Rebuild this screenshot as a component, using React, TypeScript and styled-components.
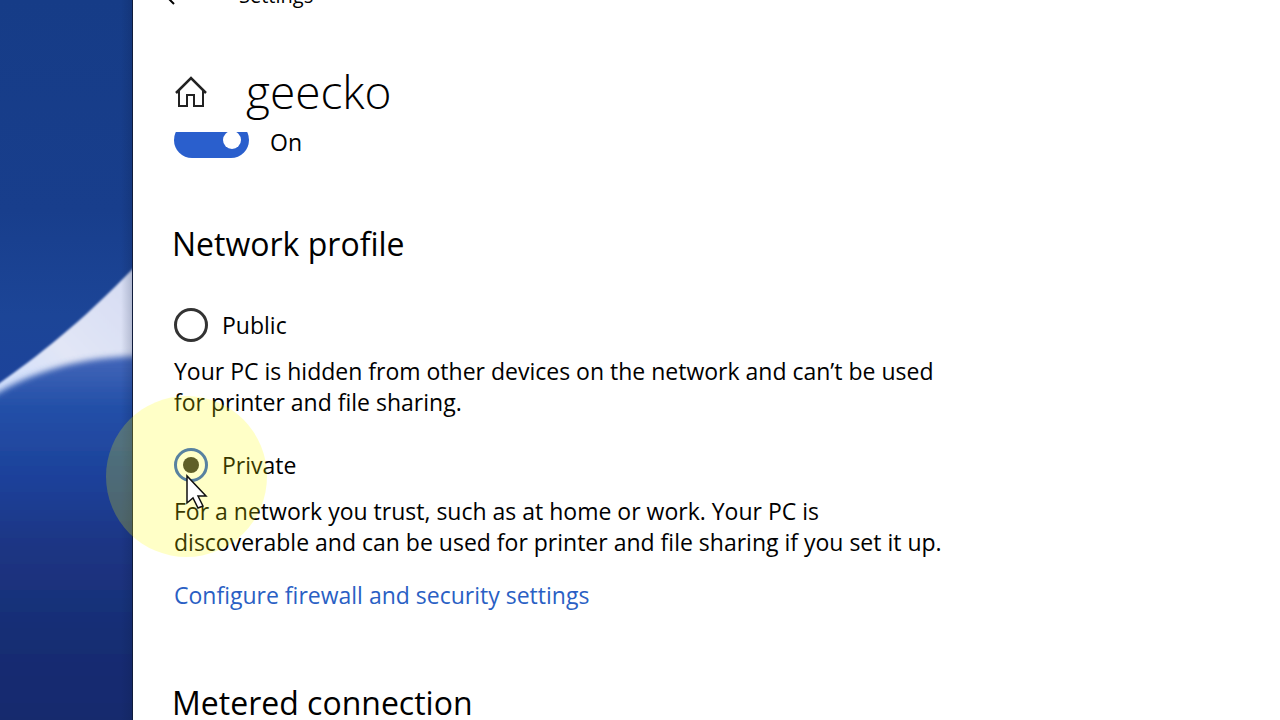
import React from 'react';
import styled, { createGlobalStyle } from 'styled-components';

const GlobalStyle = createGlobalStyle`
  *, *::before, *::after { box-sizing: border-box; }
  body {
    margin: 0;
    background: #fff;
    color: #000;
    font-family: 'Open Sans', 'Noto Sans', sans-serif;
    font-size: 23px;
    line-height: 31px;
  }
  h1, h2, p { margin: 0; }
`;

const Desktop = styled.div`
  position: relative;
  display: flex;
  height: 100vh;
  overflow: hidden;
`;

const Wallpaper = styled.svg`
  flex: 0 0 133px;
  width: 133px;
  height: 100%;
`;

const SettingsWindow = styled.main`
  flex: 1;
  min-width: 0;
  display: flex;
  flex-direction: column;
  background: #fff;
`;

const TitleBar = styled.header`
  display: flex;
  align-items: center;
  gap: 64px;
  height: 28px;
  margin-top: -18px;
  padding-left: 32px;
  font-size: 20px;
  line-height: 28px;
`;

const BackButton = styled.button`
  display: flex;
  padding: 0;
  border: 0;
  background: none;
`;

const PageHeader = styled.div`
  display: flex;
  align-items: center;
  gap: 37px;
  height: 122px;
  padding: 40px 0 0 40px;
`;

const HomeButton = styled(BackButton)``;

const PageTitle = styled.h1`
  font-size: 46px;
  font-weight: 300;
  line-height: 64px;
`;

const Content = styled.div`
  flex: 1;
  min-height: 0;
  overflow: hidden;
  padding: 0 24px 0 41px;
`;

const ToggleRow = styled.label`
  display: flex;
  align-items: flex-end;
  gap: 21px;
  height: 36px;
  margin-top: -10px;
`;

const Toggle = styled.input`
  appearance: none;
  display: flex;
  align-items: center;
  justify-content: flex-end;
  width: 75px;
  height: 36px;
  margin: 0;
  padding-right: 8px;
  border-radius: 18px;
  background: #2a5fcd;
  &::before {
    content: '';
    width: 18px;
    height: 18px;
    border-radius: 50%;
    background: #fff;
  }
`;

const SectionTitle = styled.h2`
  margin: 64px 0 0 -2px;
  font-size: 32px;
  font-weight: 400;
  line-height: 44px;
`;

const Options = styled.div`
  display: flex;
  flex-direction: column;
  gap: 30px;
  margin-top: 42px;
`;

const Option = styled.div`
  max-width: 780px;
`;

const RadioLabel = styled.label`
  display: flex;
  align-items: center;
  gap: 14px;
  height: 34px;
`;

const Radio = styled.input`
  appearance: none;
  display: grid;
  place-items: center;
  width: 34px;
  height: 34px;
  margin: 0;
  border: 3px solid #333;
  border-radius: 50%;
  &:checked { border-color: #2a5fcd; }
  &:checked::before {
    content: '';
    width: 16px;
    height: 16px;
    border-radius: 50%;
    background: #333;
  }
`;

const Description = styled.p`
  margin-top: 14px;
`;

const SettingsLink = styled.a`
  display: block;
  width: max-content;
  margin: 22px 0 70px;
  color: #2a5fc4;
  text-decoration: none;
`;

const ClickHighlight = styled.div`
  position: absolute;
  left: 106px;
  top: 396px;
  width: 161px;
  height: 161px;
  border-radius: 50%;
  background: rgba(255, 255, 0, 0.22);
  pointer-events: none;
`;

const Pointer = styled.svg`
  position: absolute;
  left: 185px;
  top: 474px;
  pointer-events: none;
`;

export default function App() {
  return (
    <Desktop>
      <GlobalStyle />
      <Wallpaper viewBox="0 0 133 720" preserveAspectRatio="none" aria-hidden="true">
        <defs>
          <linearGradient id="sky" x1="0" y1="0" x2="0" y2="1">
            <stop offset="0" stopColor="#163c87" />
            <stop offset="0.5" stopColor="#183e8c" />
            <stop offset="0.75" stopColor="#1c4597" />
            <stop offset="1" stopColor="#1c429c" />
          </linearGradient>
          <linearGradient id="petal" x1="0" y1="0" x2="0" y2="1">
            <stop offset="0" stopColor="#4467ba" />
            <stop offset="0.13" stopColor="#2450a8" />
            <stop offset="0.32" stopColor="#1d419a" />
            <stop offset="0.5" stopColor="#1b3583" />
            <stop offset="0.75" stopColor="#182d73" />
            <stop offset="1" stopColor="#172a6c" />
          </linearGradient>
          <linearGradient id="light" x1="0" y1="1" x2="1" y2="0">
            <stop offset="0" stopColor="#c9dcff" />
            <stop offset="0.45" stopColor="#e2e6f6" />
            <stop offset="1" stopColor="#d3daf2" />
          </linearGradient>
          <linearGradient id="shade" x1="0" y1="0" x2="1" y2="0">
            <stop offset="0" stopColor="#0a1a40" stopOpacity="0" />
            <stop offset="1" stopColor="#0a1a40" stopOpacity="0.2" />
          </linearGradient>
          <filter id="edge" x="-20%" y="-20%" width="140%" height="140%">
            <feGaussianBlur stdDeviation="1" />
          </filter>
          <filter id="soft" x="-20%" y="-20%" width="140%" height="140%">
            <feGaussianBlur stdDeviation="3" />
          </filter>
        </defs>
        <rect width="133" height="420" fill="url(#sky)" />
        <path d="M-10 390 C35 358 80 325 145 256 L145 420 L-10 420Z" fill="url(#light)" filter="url(#edge)" />
        <path d="M-20 404 C30 370 85 355 153 356 L153 740 L-20 740Z" fill="url(#petal)" filter="url(#soft)" />
        <rect x="121" width="12" height="720" fill="url(#shade)" />
        <rect x="132" width="1" height="720" fill="#101c3c" />
      </Wallpaper>

      <SettingsWindow>
        <TitleBar>
          <BackButton aria-label="Back">
            <svg width="10" height="18" viewBox="0 0 10 18" fill="none" stroke="#000" strokeWidth="2">
              <path d="M9 1 1 9l8 8" />
            </svg>
          </BackButton>
          <span>Settings</span>
        </TitleBar>

        <PageHeader>
          <HomeButton aria-label="Home">
            <svg width="36" height="36" viewBox="0 0 36 36" fill="none" stroke="#222" strokeWidth="2">
              <path d="M3 20 18 5l15 15" strokeWidth="2.5" />
              <path d="M6 18v15h8V22h7v11h9V18" />
            </svg>
          </HomeButton>
          <PageTitle>geecko</PageTitle>
        </PageHeader>

        <Content>
          <ToggleRow>
            <Toggle type="checkbox" role="switch" defaultChecked />
            <span>On</span>
          </ToggleRow>

          <SectionTitle>Network profile</SectionTitle>
          <Options role="radiogroup" aria-label="Network profile">
            <Option>
              <RadioLabel>
                <Radio type="radio" name="profile" aria-describedby="public-info" />
                <span>Public</span>
              </RadioLabel>
              <Description id="public-info">
                Your PC is hidden from other devices on the network and can’t be used for printer and file sharing.
              </Description>
            </Option>
            <Option>
              <RadioLabel>
                <Radio type="radio" name="profile" defaultChecked aria-describedby="private-info" />
                <span>Private</span>
              </RadioLabel>
              <Description id="private-info">
                For a network you trust, such as at home or work. Your PC is discoverable and can be used for printer
                and file sharing if you set it up.
              </Description>
            </Option>
          </Options>
          <SettingsLink href="#firewall">Configure firewall and security settings</SettingsLink>

          <SectionTitle>Metered connection</SectionTitle>
        </Content>
      </SettingsWindow>

      <ClickHighlight />
      <Pointer width="24" height="36" viewBox="0 0 24 36" aria-hidden="true">
        <path d="M2 2v27l6-5 5 10 5-2-5-10h8Z" fill="#fff" stroke="#111" strokeWidth="1.5" />
      </Pointer>
    </Desktop>
  );
}
